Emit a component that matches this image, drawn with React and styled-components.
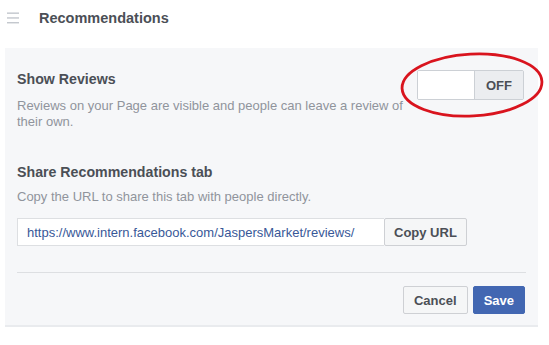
import React, { useState } from 'react'
import styled, { createGlobalStyle } from 'styled-components'

const GlobalStyle = createGlobalStyle`
  body {
    margin: 0;
    background: #ffffff;
    font-family: "Liberation Sans", Arial, Helvetica, sans-serif;
    -webkit-font-smoothing: antialiased;
  }
`

const Page = styled.div`
  width: 549px;
  height: 345px;
  overflow: hidden;
`

const Header = styled.div`
  height: 48px;
  box-sizing: border-box;
  padding: 10px 0 0 7px;
  display: flex;
  align-items: flex-start;
  gap: 20px;
`

const MenuIcon = styled.svg`
  margin-top: 2px;
  flex: none;
`

const PageTitle = styled.div`
  font-size: 14.5px;
  line-height: 17px;
  font-weight: bold;
  color: #4b4f56;
`

const Panel = styled.div`
  position: relative;
  margin-left: 5px;
  width: 533px;
  box-sizing: border-box;
  padding: 22px 12px 11px;
  background: #f6f7f9;
  border-bottom: 2px solid #e9ebee;
`

const Section = styled.div`
  display: flex;
  align-items: flex-start;
  margin-bottom: ${p => p.gap || 0}px;
`

const TextCol = styled.div`
  width: 392px;
`

const Title = styled.div`
  font-size: 14.2px;
  line-height: 18px;
  font-weight: bold;
  color: #4b4f56;
`

const Desc = styled.div`
  margin-top: ${p => p.top}px;
  font-size: 13px;
  line-height: 16px;
  color: #90949c;
`

const Toggle = styled.div`
  margin-left: auto;
  margin-right: 2px;
  display: flex;
  height: 30px;
  box-sizing: border-box;
  border: 1px solid #ccd0d5;
  border-radius: 2px;
  overflow: hidden;
  cursor: pointer;
`

const ToggleBlank = styled.div`
  width: 56px;
  background: #ffffff;
  border-right: 1px solid #ccd0d5;
`

const ToggleLabel = styled.div`
  width: 48px;
  display: flex;
  align-items: center;
  justify-content: center;
  background: #ebedf0;
  font-size: 13px;
  font-weight: bold;
  color: #4b4f56;
`

const UrlRow = styled.div`
  display: flex;
  margin-top: 13px;
  height: 28px;
`

const UrlInput = styled.input`
  width: 367px;
  box-sizing: border-box;
  height: 28px;
  margin: 0;
  padding: 0 9px;
  border: 1px solid #dddfe2;
  border-right: none;
  background: #ffffff;
  font-family: inherit;
  font-size: 13px;
  color: #385898;
  outline: none;
`

const Button = styled.button`
  height: 28px;
  box-sizing: border-box;
  margin: 0;
  padding: 0 ${p => p.pad || 10}px;
  border: 1px solid ${p => (p.primary ? '#4267b2' : '#ced0d4')};
  border-radius: 2px;
  background: ${p => (p.primary ? '#4267b2' : '#f5f6f7')};
  color: ${p => (p.primary ? '#ffffff' : '#4b4f56')};
  font-family: inherit;
  font-size: 13px;
  font-weight: bold;
  cursor: pointer;
`

const Divider = styled.div`
  margin-top: 26px;
  height: 1px;
  background: #dddfe2;
`

const Footer = styled.div`
  display: flex;
  justify-content: flex-end;
  gap: 5px;
  margin-top: 13px;
  padding-right: 1px;
`

const Highlight = styled.svg`
  position: absolute;
  left: 390px;
  top: 2px;
  pointer-events: none;
`

export default function App() {
  const [on, setOn] = useState(false)
  const url = 'https://www.intern.facebook.com/JaspersMarket/reviews/'

  return (
    <Page>
      <GlobalStyle />
      <Header>
        <MenuIcon width="12" height="12" viewBox="0 0 12 12">
          <rect x="0" y="0.5" width="12" height="1.3" fill="#bec2c9" />
          <rect x="0" y="5.3" width="12" height="1.3" fill="#bec2c9" />
          <rect x="0" y="10.1" width="12" height="1.3" fill="#bec2c9" />
        </MenuIcon>
        <PageTitle>Recommendations</PageTitle>
      </Header>

      <Panel>
        <Section gap={33}>
          <TextCol>
            <Title>Show Reviews</Title>
            <Desc top={10}>
              Reviews on your Page are visible and people can leave a review of their own.
            </Desc>
          </TextCol>
          <Toggle onClick={() => setOn(v => !v)}>
            <ToggleBlank />
            <ToggleLabel>{on ? 'ON' : 'OFF'}</ToggleLabel>
          </Toggle>
        </Section>

        <Title>Share Recommendations tab</Title>
        <Desc top={8}>Copy the URL to share this tab with people directly.</Desc>
        <UrlRow>
          <UrlInput readOnly value={url} />
          <Button pad={9}>Copy URL</Button>
        </UrlRow>

        <Divider />

        <Footer>
          <Button pad={10}>Cancel</Button>
          <Button primary pad={10}>Save</Button>
        </Footer>

        <Highlight width="156" height="72" viewBox="0 0 156 72">
          <ellipse
            cx="77"
            cy="35"
            rx="70"
            ry="31"
            fill="none"
            stroke="#d9141e"
            strokeWidth="2.8"
            transform="rotate(-3 77 35)"
          />
        </Highlight>
      </Panel>
    </Page>
  )
}
